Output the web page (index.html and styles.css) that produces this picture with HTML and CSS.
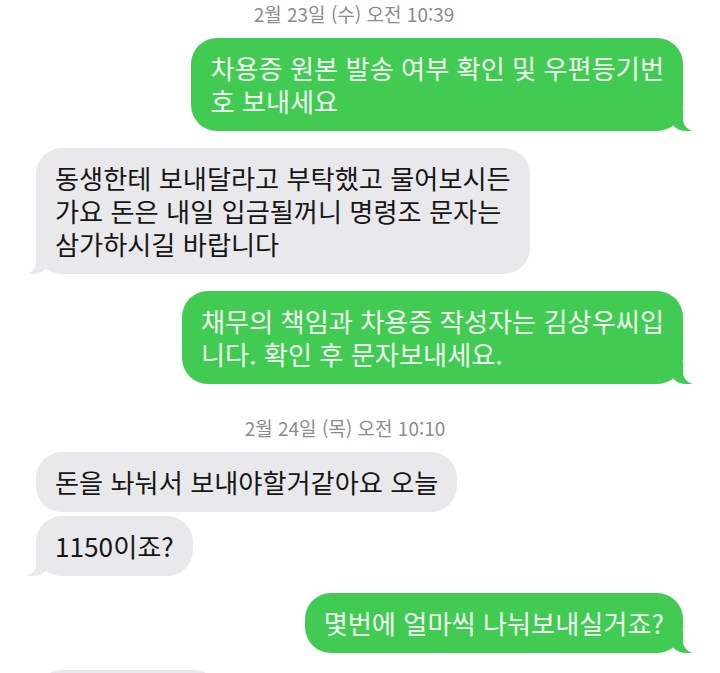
FILE: index.html
```html
<!DOCTYPE html>
<html lang="ko">
<head>
    <meta charset="UTF-8">
    <meta name="viewport" content="width=device-width, initial-scale=1.0">
    <title>메시지</title>
    <link rel="stylesheet" href="styles.css">
</head>
<body>

    <div class="chat">
        <div class="date">2월 23일 (수) 오전 10:39</div>

        <div class="row sent first-after-date">
            <div class="bubble tail">차용증 원본 발송 여부 확인 및 우편등기번<br>호 보내세요</div>
        </div>

        <div class="row received">
            <div class="bubble tail">동생한테 보내달라고 부탁했고 물어보시든<br>가요 돈은 내일 입금될꺼니 명령조 문자는<br>삼가하시길 바랍니다</div>
        </div>

        <div class="row sent">
            <div class="bubble tail">채무의 책임과 차용증 작성자는 김상우씨입<br>니다. 확인 후 문자보내세요.</div>
        </div>

        <div class="date second">2월 24일 (목) 오전 10:10</div>

        <div class="row received first-after-date">
            <div class="bubble">돈을 놔눠서 보내야할거같아요 오늘</div>
        </div>

        <div class="row received same">
            <div class="bubble tail">1150이죠?</div>
        </div>

        <div class="row sent">
            <div class="bubble tail">몇번에 얼마씩 나눠보내실거죠?</div>
        </div>

        <div class="row received">
            <div class="bubble empty"></div>
        </div>
    </div>

</body>
</html>
```

FILE: styles.css
```css
html, body {
    margin: 0;
    padding: 0;
    background-color: #fff;
}

.chat {
    height: 100vh;
    overflow: hidden;
    display: flex;
    flex-direction: column;
    font-family: "Noto Sans CJK KR", "Noto Sans", sans-serif;
}

.date {
    height: 28px;
    line-height: 28px;
    text-align: center;
    padding-right: 12px;
    font-size: 19px;
    color: #8b8b90;
}

.date.second {
    margin-top: 30px;
    padding-right: 30px;
}

.row {
    display: flex;
    margin-top: 17px;
}

.row.sent {
    justify-content: flex-end;
    padding-right: 37px;
}

.row.received {
    justify-content: flex-start;
    padding-left: 36px;
}

.row.first-after-date {
    margin-top: 10px;
}

.row.same {
    margin-top: 4px;
}

.bubble {
    position: relative;
    padding: 13.5px 19px;
    border-radius: 26px;
    font-size: 26.2px;
    line-height: 33px;
    white-space: nowrap;
}

.sent .bubble {
    background-color: #41cb53;
    color: #f3fff3;
}

.received .bubble {
    background-color: #e9e9eb;
    color: #161616;
}

.bubble.empty {
    width: 146px;
    height: 33px;
}

/* message tails */
.bubble.tail::before,
.bubble.tail::after {
    content: "";
    position: absolute;
    bottom: 0;
    height: 22px;
}

.sent .bubble.tail::before {
    right: -9px;
    width: 22px;
    background-color: #41cb53;
    border-bottom-left-radius: 16px 14px;
}

.sent .bubble.tail::after {
    right: -30px;
    width: 30px;
    background-color: #fff;
    border-bottom-left-radius: 12px;
}

.received .bubble.tail::before {
    left: -9px;
    width: 22px;
    background-color: #e9e9eb;
    border-bottom-right-radius: 16px 14px;
}

.received .bubble.tail::after {
    left: -30px;
    width: 30px;
    background-color: #fff;
    border-bottom-right-radius: 12px;
}
```
